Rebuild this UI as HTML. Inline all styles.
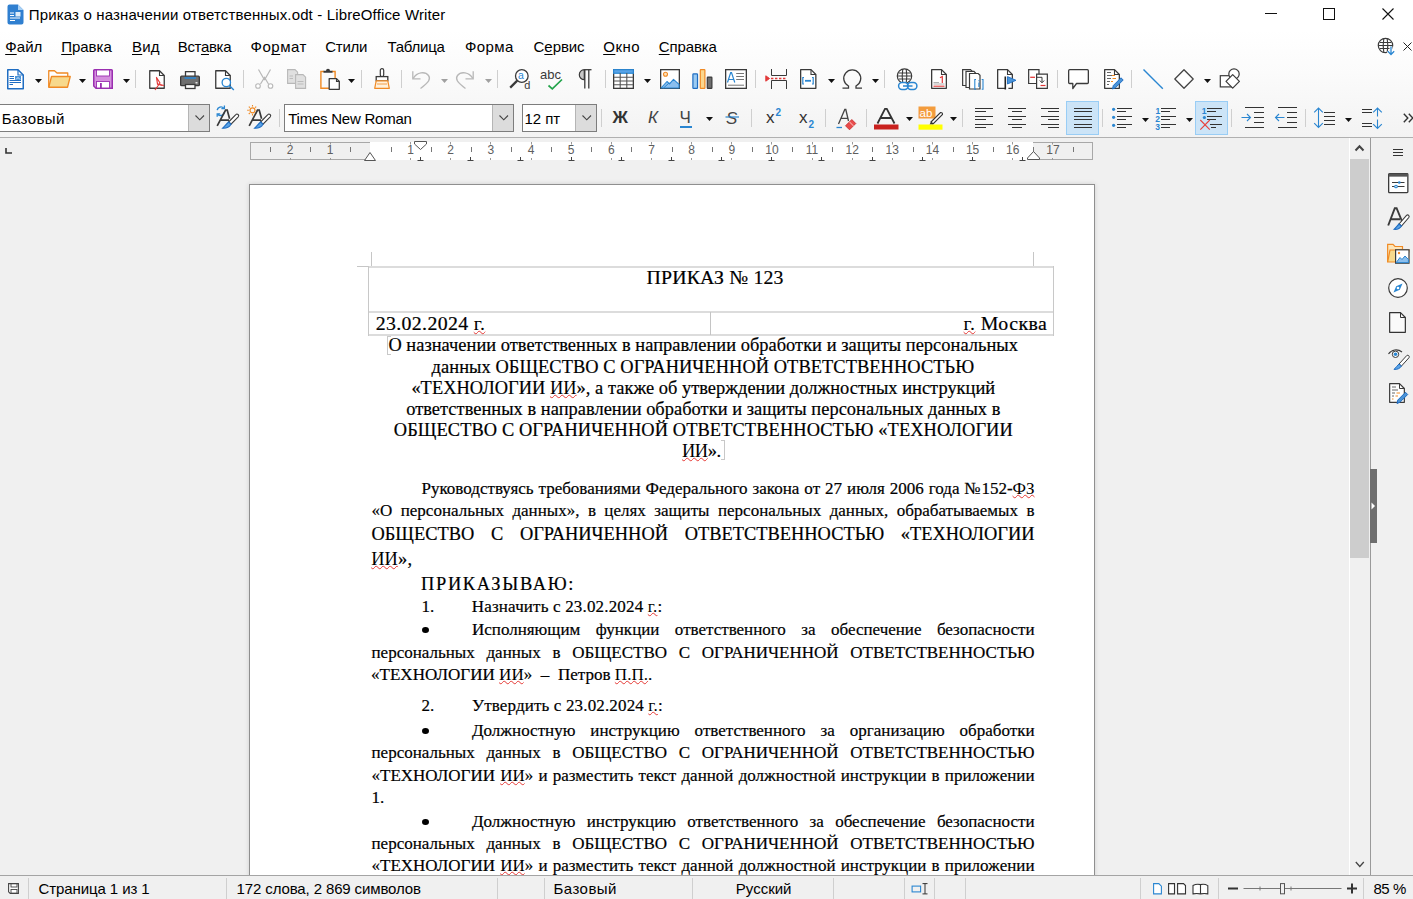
<!DOCTYPE html><html><head><meta charset="utf-8"><style>
html,body{margin:0;padding:0;}
body{width:1413px;height:899px;overflow:hidden;position:relative;background:#f0f0f0;font-family:"Liberation Sans",sans-serif;}
.t{position:absolute;}
.b{position:absolute;box-sizing:border-box;}
.i{position:absolute;overflow:visible;}
u{text-decoration:underline;text-decoration-thickness:1px;text-underline-offset:2px;text-decoration-skip-ink:none;}
.sq{text-decoration:underline wavy #e53935;text-decoration-thickness:1px;text-underline-offset:0px;-webkit-text-stroke:0;}
</style></head><body>
<div class="b" style="left:0px;top:0px;width:1413px;height:30px;background:#ffffff;"></div>
<div class="b" style="left:0px;top:30px;width:1413px;height:107px;background:linear-gradient(#ffffff 0%,#fbfbfb 40%,#f3f3f3 100%);"></div>
<div class="b" style="left:0px;top:137px;width:1413px;height:1px;background:#b0b0b0;"></div>
<div class="b" style="left:249px;top:184px;width:846px;height:720px;background:#fff;border:1px solid #8f8f8f;box-shadow:0 0 5px rgba(0,0,0,0.13);"></div>
<div class="b" style="left:357px;top:266px;width:15px;height:1px;background:#c6c6c6;"></div>
<div class="b" style="left:371px;top:252px;width:1px;height:15px;background:#c6c6c6;"></div>
<div class="b" style="left:1033px;top:252px;width:1px;height:15px;background:#c6c6c6;"></div>
<div class="b" style="left:1033px;top:266px;width:15px;height:1px;background:#c6c6c6;"></div>
<div class="b" style="left:368px;top:266px;width:686px;height:2px;background:#dcdcdc;"></div>
<div class="b" style="left:368px;top:311px;width:686px;height:2px;background:#dcdcdc;"></div>
<div class="b" style="left:368px;top:334px;width:686px;height:2px;background:#dcdcdc;"></div>
<div class="b" style="left:368px;top:266px;width:1px;height:70px;background:#c8c8c8;"></div>
<div class="b" style="left:1053px;top:266px;width:1px;height:70px;background:#c8c8c8;"></div>
<div class="b" style="left:710px;top:312px;width:1px;height:23px;background:#c4c4c4;"></div>
<div class="t" style="left:646.60px;top:264.11px;font-size:19.83px;line-height:26px;font-family:'Liberation Serif',serif;color:#000;letter-spacing:0.145px;-webkit-text-stroke:0.2px #000;text-align:left;white-space:pre;">ПРИКАЗ № 123</div>
<div class="t" style="left:375.80px;top:310.11px;font-size:19.83px;line-height:26px;font-family:'Liberation Serif',serif;color:#000;letter-spacing:0.342px;-webkit-text-stroke:0.2px #000;text-align:left;white-space:pre;">23.02.2024 <span class="sq">г.</span></div>
<div class="t" style="left:963.60px;top:310.11px;font-size:19.83px;line-height:26px;font-family:'Liberation Serif',serif;color:#000;letter-spacing:0.45px;-webkit-text-stroke:0.2px #000;text-align:left;white-space:pre;"><span class="sq">г.</span> Москва</div>
<div class="b" style="left:387px;top:336px;width:1px;height:19px;background:#c8c8c8;"></div>
<div class="b" style="left:387px;top:336px;width:4px;height:1px;background:#c8c8c8;"></div>
<div class="b" style="left:387px;top:354px;width:4px;height:1px;background:#c8c8c8;"></div>
<div class="t" style="left:388.40px;top:332.98px;font-size:18.42px;line-height:24px;font-family:'Liberation Serif',serif;color:#000;letter-spacing:0.027px;-webkit-text-stroke:0.2px #000;text-align:left;white-space:pre;">О назначении ответственных в направлении обработки и защиты персональных</div>
<div class="t" style="left:431.60px;top:354.68px;font-size:18.42px;line-height:24px;font-family:'Liberation Serif',serif;color:#000;letter-spacing:0.059px;-webkit-text-stroke:0.2px #000;text-align:left;white-space:pre;">данных ОБЩЕСТВО С ОГРАНИЧЕННОЙ ОТВЕТСТВЕННОСТЬЮ</div>
<div class="t" style="left:411.40px;top:375.58px;font-size:18.42px;line-height:24px;font-family:'Liberation Serif',serif;color:#000;letter-spacing:0.026px;-webkit-text-stroke:0.2px #000;text-align:left;white-space:pre;">«ТЕХНОЛОГИИ <span class="sq">ИИ</span>», а также об утверждении должностных инструкций</div>
<div class="t" style="left:406.20px;top:396.98px;font-size:18.42px;line-height:24px;font-family:'Liberation Serif',serif;color:#000;letter-spacing:0.03px;-webkit-text-stroke:0.2px #000;text-align:left;white-space:pre;">ответственных в направлении обработки и защиты персональных данных в</div>
<div class="t" style="left:393.80px;top:417.98px;font-size:18.42px;line-height:24px;font-family:'Liberation Serif',serif;color:#000;letter-spacing:0.086px;-webkit-text-stroke:0.2px #000;text-align:left;white-space:pre;">ОБЩЕСТВО С ОГРАНИЧЕННОЙ ОТВЕТСТВЕННОСТЬЮ «ТЕХНОЛОГИИ</div>
<div class="t" style="left:682.00px;top:438.98px;font-size:18.42px;line-height:24px;font-family:'Liberation Serif',serif;color:#000;letter-spacing:-0.433px;-webkit-text-stroke:0.2px #000;text-align:left;white-space:pre;"><span class="sq">ИИ</span>».</div>
<div class="b" style="left:724px;top:440px;width:1px;height:20px;background:#c8c8c8;"></div>
<div class="b" style="left:721px;top:440px;width:4px;height:1px;background:#c8c8c8;"></div>
<div class="b" style="left:721px;top:459px;width:4px;height:1px;background:#c8c8c8;"></div>
<div class="t" style="left:421.50px;top:478.06px;font-size:17.0px;line-height:22px;font-family:'Liberation Serif',serif;color:#000;-webkit-text-stroke:0.2px #000;width:613.00px;text-align:justify;text-align-last:justify;white-space:normal;">Руководствуясь требованиями Федерального закона от 27 июля 2006 года №152-<span class="sq">ФЗ</span></div>
<div class="t" style="left:371.50px;top:500.06px;font-size:17.0px;line-height:22px;font-family:'Liberation Serif',serif;color:#000;-webkit-text-stroke:0.2px #000;width:663.00px;text-align:justify;text-align-last:justify;white-space:normal;">«О персональных данных», в целях защиты персональных данных, обрабатываемых в</div>
<div class="t" style="left:371.50px;top:522.28px;font-size:18.42px;line-height:24px;font-family:'Liberation Serif',serif;color:#000;-webkit-text-stroke:0.2px #000;width:663.00px;text-align:justify;text-align-last:justify;white-space:normal;">ОБЩЕСТВО С ОГРАНИЧЕННОЙ ОТВЕТСТВЕННОСТЬЮ «ТЕХНОЛОГИИ</div>
<div class="t" style="left:371.20px;top:547.48px;font-size:18.42px;line-height:24px;font-family:'Liberation Serif',serif;color:#000;letter-spacing:0.133px;-webkit-text-stroke:0.2px #000;text-align:left;white-space:pre;"><span class="sq">ИИ</span>»,</div>
<div class="t" style="left:421.00px;top:571.78px;font-size:18.42px;line-height:24px;font-family:'Liberation Serif',serif;color:#000;letter-spacing:1.68px;-webkit-text-stroke:0.2px #000;text-align:left;white-space:pre;">ПРИКАЗЫВАЮ:</div>
<div class="t" style="left:421.50px;top:595.76px;font-size:17.0px;line-height:22px;font-family:'Liberation Serif',serif;color:#000;-webkit-text-stroke:0.2px #000;text-align:left;white-space:pre;">1.</div>
<div class="t" style="left:471.80px;top:595.76px;font-size:17.0px;line-height:22px;font-family:'Liberation Serif',serif;color:#000;letter-spacing:0.168px;-webkit-text-stroke:0.2px #000;text-align:left;white-space:pre;">Назначить с 23.02.2024 <span class="sq">г.</span>:</div>
<div class="b" style="left:422.3px;top:626.9px;width:7px;height:6.2px;background:#000;border-radius:50%;"></div>
<div class="t" style="left:472.00px;top:618.66px;font-size:17.0px;line-height:22px;font-family:'Liberation Serif',serif;color:#000;-webkit-text-stroke:0.2px #000;width:562.50px;text-align:justify;text-align-last:justify;white-space:normal;">Исполняющим функции ответственного за обеспечение безопасности</div>
<div class="t" style="left:371.50px;top:641.66px;font-size:17.0px;line-height:22px;font-family:'Liberation Serif',serif;color:#000;-webkit-text-stroke:0.2px #000;width:663.00px;text-align:justify;text-align-last:justify;white-space:normal;">персональных данных в ОБЩЕСТВО С ОГРАНИЧЕННОЙ ОТВЕТСТВЕННОСТЬЮ</div>
<div class="t" style="left:371.00px;top:664.26px;font-size:17.0px;line-height:22px;font-family:'Liberation Serif',serif;color:#000;letter-spacing:0.032px;-webkit-text-stroke:0.2px #000;text-align:left;white-space:pre;">«ТЕХНОЛОГИИ <span class="sq">ИИ</span>»  –  Петров <span class="sq">П.П.</span>.</div>
<div class="t" style="left:421.50px;top:695.26px;font-size:17.0px;line-height:22px;font-family:'Liberation Serif',serif;color:#000;-webkit-text-stroke:0.2px #000;text-align:left;white-space:pre;">2.</div>
<div class="t" style="left:472.00px;top:695.26px;font-size:17.0px;line-height:22px;font-family:'Liberation Serif',serif;color:#000;letter-spacing:0.148px;-webkit-text-stroke:0.2px #000;text-align:left;white-space:pre;">Утвердить с 23.02.2024 <span class="sq">г.</span>:</div>
<div class="b" style="left:422.3px;top:728.0px;width:7px;height:6.2px;background:#000;border-radius:50%;"></div>
<div class="t" style="left:472.00px;top:719.76px;font-size:17.0px;line-height:22px;font-family:'Liberation Serif',serif;color:#000;-webkit-text-stroke:0.2px #000;width:562.50px;text-align:justify;text-align-last:justify;white-space:normal;">Должностную инструкцию ответственного за организацию обработки</div>
<div class="t" style="left:371.50px;top:742.26px;font-size:17.0px;line-height:22px;font-family:'Liberation Serif',serif;color:#000;-webkit-text-stroke:0.2px #000;width:663.00px;text-align:justify;text-align-last:justify;white-space:normal;">персональных данных в ОБЩЕСТВО С ОГРАНИЧЕННОЙ ОТВЕТСТВЕННОСТЬЮ</div>
<div class="t" style="left:371.50px;top:764.76px;font-size:17.0px;line-height:22px;font-family:'Liberation Serif',serif;color:#000;-webkit-text-stroke:0.2px #000;width:663.00px;text-align:justify;text-align-last:justify;white-space:normal;">«ТЕХНОЛОГИИ <span class="sq">ИИ</span>» и разместить текст данной должностной инструкции в приложении</div>
<div class="t" style="left:371.50px;top:787.36px;font-size:17.0px;line-height:22px;font-family:'Liberation Serif',serif;color:#000;-webkit-text-stroke:0.2px #000;text-align:left;white-space:pre;">1.</div>
<div class="b" style="left:422.3px;top:818.9px;width:7px;height:6.2px;background:#000;border-radius:50%;"></div>
<div class="t" style="left:472.00px;top:810.66px;font-size:17.0px;line-height:22px;font-family:'Liberation Serif',serif;color:#000;-webkit-text-stroke:0.2px #000;width:562.50px;text-align:justify;text-align-last:justify;white-space:normal;">Должностную инструкцию ответственного за обеспечение безопасности</div>
<div class="t" style="left:371.50px;top:832.86px;font-size:17.0px;line-height:22px;font-family:'Liberation Serif',serif;color:#000;-webkit-text-stroke:0.2px #000;width:663.00px;text-align:justify;text-align-last:justify;white-space:normal;">персональных данных в ОБЩЕСТВО С ОГРАНИЧЕННОЙ ОТВЕТСТВЕННОСТЬЮ</div>
<div class="t" style="left:371.50px;top:855.06px;font-size:17.0px;line-height:22px;font-family:'Liberation Serif',serif;color:#000;-webkit-text-stroke:0.2px #000;width:663.00px;text-align:justify;text-align-last:justify;white-space:normal;">«ТЕХНОЛОГИИ <span class="sq">ИИ</span>» и разместить текст данной должностной инструкции в приложении</div>
<svg class="i" style="left:7px;top:4px;" width="17" height="21" viewBox="0 0 17 21"><path d="M1.5,0.5H11L16.5,6V18.5A2,2 0 0 1 14.5,20.5H2.5A2,2 0 0 1 0.5,18.5V2.5A2,2 0 0 1 2.5,0.5Z" fill="#2f7fd0"/><path d="M11,0.5V6H16.5Z" fill="#a9d1f5"/><path d="M3,9H7M3,11.5H7M3,14H13M3,16.5H8" stroke="#fff" stroke-width="1.2"/><rect x="8.5" y="8" width="5" height="4.5" fill="#fff" opacity="0.85"/></svg>
<div class="t" style="left:28.80px;top:5.10px;font-size:15px;line-height:20px;font-family:'Liberation Sans',sans-serif;color:#000;letter-spacing:0.146px;text-align:left;white-space:pre;">Приказ о назначении ответственных.odt - LibreOffice Writer</div>
<div class="b" style="left:1265px;top:13px;width:12px;height:1px;background:#111;"></div>
<div class="b" style="left:1323px;top:8px;width:12px;height:12px;border:1px solid #111;"></div>
<svg class="i" style="left:1382px;top:8px;" width="12" height="12" viewBox="0 0 12 12"><path d="M0.5,0.5L11.5,11.5M11.5,0.5L0.5,11.5" stroke="#111" stroke-width="1.1"/></svg>
<div class="t" style="left:5.20px;top:37.20px;font-size:15px;line-height:20px;font-family:'Liberation Sans',sans-serif;color:#000;letter-spacing:0.1px;text-align:left;white-space:pre;"><u>Ф</u>айл</div>
<div class="t" style="left:61.20px;top:37.20px;font-size:15px;line-height:20px;font-family:'Liberation Sans',sans-serif;color:#000;letter-spacing:-0.02px;text-align:left;white-space:pre;"><u>П</u>равка</div>
<div class="t" style="left:132.00px;top:37.20px;font-size:15px;line-height:20px;font-family:'Liberation Sans',sans-serif;color:#000;letter-spacing:0.2px;text-align:left;white-space:pre;"><u>В</u>ид</div>
<div class="t" style="left:177.80px;top:37.20px;font-size:15px;line-height:20px;font-family:'Liberation Sans',sans-serif;color:#000;letter-spacing:-0.35px;text-align:left;white-space:pre;">Вст<u>а</u>вка</div>
<div class="t" style="left:250.60px;top:37.20px;font-size:15px;line-height:20px;font-family:'Liberation Sans',sans-serif;color:#000;letter-spacing:0.5px;text-align:left;white-space:pre;">Фо<u>р</u>мат</div>
<div class="t" style="left:325.20px;top:37.20px;font-size:15px;line-height:20px;font-family:'Liberation Sans',sans-serif;color:#000;letter-spacing:-0.25px;text-align:left;white-space:pre;">Стили</div>
<div class="t" style="left:387.40px;top:37.20px;font-size:15px;line-height:20px;font-family:'Liberation Sans',sans-serif;color:#000;letter-spacing:-0.217px;text-align:left;white-space:pre;">Таблица</div>
<div class="t" style="left:465.00px;top:37.20px;font-size:15px;line-height:20px;font-family:'Liberation Sans',sans-serif;color:#000;letter-spacing:0.375px;text-align:left;white-space:pre;">Форма</div>
<div class="t" style="left:533.60px;top:37.20px;font-size:15px;line-height:20px;font-family:'Liberation Sans',sans-serif;color:#000;letter-spacing:-0.08px;text-align:left;white-space:pre;">С<u>е</u>рвис</div>
<div class="t" style="left:603.20px;top:37.20px;font-size:15px;line-height:20px;font-family:'Liberation Sans',sans-serif;color:#000;letter-spacing:0.533px;text-align:left;white-space:pre;"><u>О</u>кно</div>
<div class="t" style="left:658.80px;top:37.20px;font-size:15px;line-height:20px;font-family:'Liberation Sans',sans-serif;color:#000;letter-spacing:-0.117px;text-align:left;white-space:pre;"><u>С</u>правка</div>
<svg class="i" style="left:1377px;top:37px;" width="19" height="19" viewBox="0 0 19 19"><circle cx="8.5" cy="8.5" r="7.2" fill="none" stroke="#3a3a3a" stroke-width="1.2"/><path d="M6.8,1.5C6,6 6,11 6.8,15.5M10.2,1.5C11,6 11,11 10.2,15.5M2.8,5.5H14.2M1.3,8.5H15.7M2.8,11.5H14.2" fill="none" stroke="#3a3a3a" stroke-width="1.1"/><path d="M14,9.5V17.5M10.8,14.3L14,17.5L17.2,14.3" fill="none" stroke="#fff" stroke-width="3"/><path d="M14,9.5V17.5M10.8,14.3L14,17.5L17.2,14.3" fill="none" stroke="#2a86d1" stroke-width="1.3"/></svg>
<svg class="i" style="left:1403px;top:42px;" width="9" height="9" viewBox="0 0 9 9"><path d="M0.5,0.5L8.5,8.5M8.5,0.5L0.5,8.5" stroke="#222" stroke-width="1"/></svg>
<svg class="i" style="left:7px;top:69px;" width="17" height="21" viewBox="0 0 17 21"><path d="M0.75,0.75H11L16.25,6V19.75H0.75Z" fill="#fff" stroke="#1f6dc2" stroke-width="1.5" stroke-linejoin="round"/><path d="M11,0.75V6H16.25" fill="none" stroke="#1f6dc2" stroke-width="1.2"/><path d="M2.5,7.5H7M2.5,9.5H7M2.5,11.5H14M2.5,13.5H14M2.5,15.5H6" stroke="#1f6dc2" stroke-width="1"/><rect x="8" y="7" width="6" height="4" fill="#4b94d8"/><path d="M9,10.5L11,8.5L13,10.5" stroke="#fff" stroke-width="0.8" fill="none"/></svg>
<svg class="i" style="left:35px;top:79px;" width="7" height="4" viewBox="0 0 7 4"><path d="M0,0H7L3.5,4Z" fill="#111"/></svg>
<svg class="i" style="left:48px;top:70px;" width="23" height="18" viewBox="0 0 23 18"><path d="M0.75,17V0.75H6.5L9,3H19.75V6" fill="#fff" stroke="#f08a24" stroke-width="1.3" stroke-linejoin="round"/><path d="M0.75,17.25L3.5,6.5H22.25L19.5,17.25Z" fill="#f7d98c" stroke="#f08a24" stroke-width="1.3" stroke-linejoin="round"/></svg>
<svg class="i" style="left:79px;top:79px;" width="7" height="4" viewBox="0 0 7 4"><path d="M0,0H7L3.5,4Z" fill="#111"/></svg>
<svg class="i" style="left:93px;top:69px;" width="20" height="20" viewBox="0 0 20 20"><path d="M1.5,0.75H18.5A0.75,0.75 0 0 1 19.25,1.5V19.25H3L0.75,17V1.5A0.75,0.75 0 0 1 1.5,0.75Z" fill="#d590de" stroke="#9a2fb0" stroke-width="1.5"/><rect x="3.5" y="1" width="13" height="6" fill="#fff" stroke="#9a2fb0" stroke-width="0.9"/><rect x="3.5" y="12.5" width="13" height="6.5" fill="#fff" stroke="#9a2fb0" stroke-width="0.9"/><rect x="7" y="14" width="1.8" height="5" fill="#9a2fb0"/></svg>
<svg class="i" style="left:123px;top:79px;" width="7" height="4" viewBox="0 0 7 4"><path d="M0,0H7L3.5,4Z" fill="#111"/></svg>
<div class="b" style="left:135px;top:70px;width:1px;height:18px;background:#cfcfcf;"></div>
<svg class="i" style="left:149px;top:70px;" width="20" height="21" viewBox="0 0 20 21"><path d="M0.75,0.75H10.5L15.25,5.5V18.25H0.75Z" fill="#fff" stroke="#3a3a3a" stroke-width="1.3" stroke-linejoin="round"/><path d="M10.5,0.75V5.5H15.25" fill="none" stroke="#3a3a3a" stroke-width="1.1"/><path d="M6,20L11,13L7.5,7.5L8.5,14L13.5,15.5" fill="none" stroke="#e23a3a" stroke-width="1.2" stroke-linejoin="round"/><path d="M8,14L15,15.5" stroke="#e23a3a" stroke-width="1.2"/></svg>
<svg class="i" style="left:180px;top:71px;" width="20" height="18" viewBox="0 0 20 18"><rect x="5.5" y="0.65" width="9.5" height="6.5" fill="#fff" stroke="#3a3a3a" stroke-width="1.3"/><rect x="0.65" y="5.2" width="18.7" height="9.5" rx="1" fill="#6f6f6f" stroke="#3a3a3a" stroke-width="1.3"/><rect x="4.5" y="6.2" width="11.5" height="1.6" fill="#2a86d1"/><rect x="5.5" y="13.5" width="9.5" height="4" fill="#fff" stroke="#3a3a3a" stroke-width="1.3"/><rect x="15.5" y="11.2" width="2" height="1.2" fill="#fff"/></svg>
<svg class="i" style="left:215px;top:70px;" width="20" height="21" viewBox="0 0 20 21"><path d="M0.75,0.75H10.5L15.25,5.5V18.25H0.75Z" fill="#fff" stroke="#3a3a3a" stroke-width="1.3" stroke-linejoin="round"/><path d="M10.5,0.75V5.5H15.25" fill="none" stroke="#3a3a3a" stroke-width="1.1"/><circle cx="11.3" cy="12.5" r="4.2" fill="#fff" stroke="#2a86d1" stroke-width="1.3"/><path d="M14.3,15.5L18.8,20" stroke="#2a86d1" stroke-width="1.4"/></svg>
<div class="b" style="left:243px;top:70px;width:1px;height:18px;background:#cfcfcf;"></div>
<svg class="i" style="left:255px;top:69px;" width="19" height="20" viewBox="0 0 19 20"><path d="M3.5,0.5L9.5,11M15.5,0.5L9.5,11M5.5,15L9.5,8.5L13.5,15" fill="none" stroke="#b8b8b8" stroke-width="1.2"/><circle cx="3" cy="17" r="2.3" fill="#fff" stroke="#b8b8b8" stroke-width="1.1"/><circle cx="15.5" cy="17" r="2.3" fill="#fff" stroke="#b8b8b8" stroke-width="1.1"/></svg>
<svg class="i" style="left:287px;top:69px;" width="21" height="20" viewBox="0 0 21 20"><path d="M0.6,0.6H8L10.6,3.2V14.4H0.6Z" fill="#e0e0e0" stroke="#b8b8b8" stroke-width="1.1"/><path d="M8.6,5.6H16L18.6,8.2V19.4H8.6Z" fill="#e0e0e0" stroke="#b8b8b8" stroke-width="1.1"/><path d="M2.5,7H6M2.5,9.5H6M10.5,12.5H16.5M10.5,15H16.5" stroke="#b8b8b8" stroke-width="0.9"/></svg>
<svg class="i" style="left:320px;top:68px;" width="20" height="22" viewBox="0 0 20 22"><path d="M4,3.5H0.9V20.3H9M12,3.5H15.1V10" fill="none" stroke="#f08a24" stroke-width="1.4"/><path d="M3.5,4.8V2.8H6A2,2 0 0 1 10,2.8H12.5V4.8Z" fill="#3a3a3a"/><path d="M9.2,10.6H16.5L19.3,13.4V21.3H9.2Z" fill="#fff" stroke="#3a3a3a" stroke-width="1.3" stroke-linejoin="round"/><path d="M16.5,10.6V13.4H19.3" fill="none" stroke="#3a3a3a" stroke-width="1.1"/></svg>
<svg class="i" style="left:348px;top:79px;" width="7" height="4" viewBox="0 0 7 4"><path d="M0,0H7L3.5,4Z" fill="#111"/></svg>
<div class="b" style="left:361px;top:70px;width:1px;height:18px;background:#cfcfcf;"></div>
<svg class="i" style="left:374px;top:68px;" width="16" height="21" viewBox="0 0 16 21"><rect x="6.3" y="0.6" width="3.4" height="8" rx="1.7" fill="#fff" stroke="#3a3a3a" stroke-width="1.2"/><rect x="2.2" y="8.6" width="11.6" height="4.2" fill="#fff" stroke="#3a3a3a" stroke-width="1.3"/><path d="M2.2,12.8H13.8L15.3,20.3H0.7Z" fill="#fff1dc" stroke="#f08a24" stroke-width="1.2" stroke-linejoin="round"/><path d="M3,16H13" stroke="#f08a24" stroke-width="0.8"/></svg>
<div class="b" style="left:401px;top:70px;width:1px;height:18px;background:#cfcfcf;"></div>
<svg class="i" style="left:411px;top:70px;" width="20" height="19" viewBox="0 0 20 19"><path d="M1.8,1.2V8.8H9.5" fill="none" stroke="#b8b8b8" stroke-width="1.3"/><path d="M2.2,8.3C6,2.2 14,1 17.5,5.5C20,9 18,12 9.5,18.5" fill="none" stroke="#b8b8b8" stroke-width="1.3"/></svg>
<svg class="i" style="left:441px;top:79px;" width="7" height="4" viewBox="0 0 7 4"><path d="M0,0H7L3.5,4Z" fill="#a0a0a0"/></svg>
<svg class="i" style="left:455px;top:70px;" width="20" height="19" viewBox="0 0 20 19"><g transform="translate(20,0) scale(-1,1)"><path d="M1.8,1.2V8.8H9.5" fill="none" stroke="#b8b8b8" stroke-width="1.3"/><path d="M2.2,8.3C6,2.2 14,1 17.5,5.5C20,9 18,12 9.5,18.5" fill="none" stroke="#b8b8b8" stroke-width="1.3"/></g></svg>
<svg class="i" style="left:485px;top:79px;" width="7" height="4" viewBox="0 0 7 4"><path d="M0,0H7L3.5,4Z" fill="#a0a0a0"/></svg>
<div class="b" style="left:497px;top:70px;width:1px;height:18px;background:#cfcfcf;"></div>
<svg class="i" style="left:509px;top:68px;" width="23" height="22" viewBox="0 0 23 22"><circle cx="12.8" cy="8" r="6.3" fill="#fff" stroke="#3a3a3a" stroke-width="1.3"/><path d="M8.2,12.6L1.2,19.6" stroke="#3a3a3a" stroke-width="2.2"/><text x="9" y="11.2" font-family="Liberation Sans" font-size="10.5" fill="#2a86d1">a</text><text x="15.2" y="21" font-family="Liberation Sans" font-size="11" fill="#3a3a3a">d</text></svg>
<svg class="i" style="left:540px;top:68px;" width="25" height="22" viewBox="0 0 25 22"><text x="0" y="11" font-family="Liberation Sans" font-size="13" fill="#3a3a3a">abc</text><path d="M8.5,17.5L12.3,20.8L22,11.5" fill="none" stroke="#22a34a" stroke-width="1.7"/></svg>
<svg class="i" style="left:576px;top:69px;" width="16" height="20" viewBox="0 0 16 20"><path d="M8.5,0.7H15.5" stroke="#3a3a3a" stroke-width="1.3"/><path d="M8.3,0.7A5,5 0 0 0 8.3,10.7Z" fill="#c8c8c8" stroke="#3a3a3a" stroke-width="1.2"/><path d="M8.8,0.7V19.5M12.8,0.7V19.5" stroke="#3a3a3a" stroke-width="1.3"/></svg>
<div class="b" style="left:605px;top:70px;width:1px;height:18px;background:#cfcfcf;"></div>
<svg class="i" style="left:613px;top:69px;" width="21" height="20" viewBox="0 0 21 20"><rect x="0.65" y="0.65" width="19.7" height="18.7" fill="#fff" stroke="#3a3a3a" stroke-width="1.3"/><rect x="0.65" y="0.65" width="19.7" height="3.6" fill="#5aa3e6" stroke="#2a86d1" stroke-width="1.2"/><path d="M7.2,4V19M13.8,4V19M1,8.2H20M1,12H20M1,15.7H20" stroke="#555" stroke-width="1.1"/></svg>
<svg class="i" style="left:644px;top:79px;" width="7" height="4" viewBox="0 0 7 4"><path d="M0,0H7L3.5,4Z" fill="#111"/></svg>
<svg class="i" style="left:660px;top:69px;" width="20" height="20" viewBox="0 0 20 20"><rect x="0.65" y="0.65" width="18.7" height="18.7" fill="#fff" stroke="#3a3a3a" stroke-width="1.3"/><circle cx="5.5" cy="5.3" r="2" fill="#fde0b8" stroke="#f08a24" stroke-width="1.1"/><path d="M1,19L7,12.5L9.5,14.8L13.5,10.3L19,15.3V19Z" fill="#8bbfee" stroke="#2a86d1" stroke-width="1.1" stroke-linejoin="round"/><path d="M3.5,19L9.3,13.8" stroke="#2a86d1" stroke-width="1"/></svg>
<svg class="i" style="left:692px;top:69px;" width="21" height="20" viewBox="0 0 21 20"><rect x="0.9" y="4.9" width="4.6" height="14.4" rx="0.6" fill="#9ccbf2" stroke="#1f6dc2" stroke-width="1.2"/><rect x="8.3" y="0.6" width="4.6" height="18.7" rx="0.6" fill="#fbd78e" stroke="#f08a24" stroke-width="1.2"/><rect x="15.3" y="8.1" width="4.6" height="11.2" rx="0.6" fill="#6e6e6e" stroke="#3a3a3a" stroke-width="1.2"/></svg>
<svg class="i" style="left:725px;top:69px;" width="22" height="20" viewBox="0 0 22 20"><rect x="0.65" y="0.65" width="20.7" height="18.7" fill="#fff" stroke="#3a3a3a" stroke-width="1.3"/><path d="M2.5,13.5L5.7,3.5H6.5L9.8,13.5M3.6,10.5H8.7" fill="none" stroke="#2a86d1" stroke-width="1.2"/><path d="M11.2,4.5H19M11.2,7.5H19M11.2,10.5H19M3,16.2H19" stroke="#666" stroke-width="0.9"/></svg>
<div class="b" style="left:755px;top:70px;width:1px;height:18px;background:#cfcfcf;"></div>
<svg class="i" style="left:765px;top:69px;" width="23" height="21" viewBox="0 0 23 21"><path d="M6.5,0V6.5H21.5V0M6.5,20V11.5H21.5V20" fill="none" stroke="#3a3a3a" stroke-width="1"/><path d="M6,9.5H22" stroke="#e23a3a" stroke-width="1.3" stroke-dasharray="2.4,1.6"/><path d="M0.8,6.8L4.5,9.5L0.8,12.2Z" fill="#e23a3a" stroke="#e23a3a" stroke-width="1"/></svg>
<svg class="i" style="left:800px;top:69px;" width="17" height="20" viewBox="0 0 17 20"><path d="M0.65,0.65H11L15.85,5.5V19.35H0.65Z" fill="#fff" stroke="#3a3a3a" stroke-width="1.3" stroke-linejoin="round"/><path d="M11,0.65V5.5H15.85" fill="none" stroke="#3a3a3a" stroke-width="1.1"/><path d="M4,8.5H2.8V15H4M12,8.5H13.2V15H12" fill="none" stroke="#2a86d1" stroke-width="1.2"/><path d="M5,11.8H11" stroke="#2a86d1" stroke-width="1.8"/></svg>
<svg class="i" style="left:828px;top:79px;" width="7" height="4" viewBox="0 0 7 4"><path d="M0,0H7L3.5,4Z" fill="#111"/></svg>
<svg class="i" style="left:842px;top:69px;" width="21" height="20" viewBox="0 0 21 20"><path d="M0.5,19.2H6.5V17A8.5,8.5 0 1 1 14,17V19.2H20" fill="none" stroke="#3a3a3a" stroke-width="1.3"/></svg>
<svg class="i" style="left:872px;top:79px;" width="7" height="4" viewBox="0 0 7 4"><path d="M0,0H7L3.5,4Z" fill="#111"/></svg>
<div class="b" style="left:884px;top:70px;width:1px;height:18px;background:#cfcfcf;"></div>
<svg class="i" style="left:896px;top:68px;" width="22" height="23" viewBox="0 0 22 23"><circle cx="8.5" cy="8" r="7.2" fill="#fff" stroke="#3a3a3a" stroke-width="1.2"/><path d="M6.8,1C6,5.5 6,10.5 6.8,15M10.2,1C11,5.5 11,10.5 10.2,15M2.8,5H14.2M1.3,8H15.7M2.8,11H14.2" fill="none" stroke="#3a3a3a" stroke-width="1.1"/><rect x="2.6" y="14.6" width="9.5" height="6.8" rx="3.4" fill="#fff" stroke="#2a86d1" stroke-width="1.5"/><rect x="11.4" y="14.6" width="9.5" height="6.8" rx="3.4" fill="none" stroke="#2a86d1" stroke-width="1.5"/><path d="M7,18H16.5" stroke="#2a86d1" stroke-width="1.5"/></svg>
<svg class="i" style="left:931px;top:69px;" width="17" height="21" viewBox="0 0 17 21"><path d="M0.65,0.65H10.5L15.35,5.5V19.35H0.65Z" fill="#fff" stroke="#3a3a3a" stroke-width="1.3" stroke-linejoin="round"/><path d="M10.5,0.65V5.5H15.35" fill="none" stroke="#3a3a3a" stroke-width="1.1"/><path d="M9,8.8L11.3,7.5V14" fill="none" stroke="#e23a3a" stroke-width="1.2"/><path d="M2.5,13.5H8M2.5,15H13.5" stroke="#b0b0b0" stroke-width="1"/><path d="M2.5,17.2H13.5" stroke="#e23a3a" stroke-width="1.1"/></svg>
<svg class="i" style="left:962px;top:69px;" width="23" height="22" viewBox="0 0 23 22"><path d="M0.65,0.65H8.5L10,2.2V16.5H0.65Z" fill="#fff" stroke="#3a3a3a" stroke-width="1.2"/><path d="M4,2.4H12L13.5,4V18.5H4Z" fill="#fff" stroke="#3a3a3a" stroke-width="1.2"/><path d="M7.5,4.5H16.2L18,6.2V20H7.5Z" fill="#fff" stroke="#3a3a3a" stroke-width="1.2"/><path d="M14,10.5H12.8V20.3H14M19.7,10.5H21V20.3H19.7" fill="none" stroke="#2a86d1" stroke-width="1.1"/><path d="M16.9,13.5V18M16.9,11.2V12.3" stroke="#2a86d1" stroke-width="1.1"/></svg>
<svg class="i" style="left:997px;top:69px;" width="20" height="21" viewBox="0 0 20 21"><path d="M0.65,0.65H10.5L15.35,5.5V19.35H0.65Z" fill="#fff" stroke="#3a3a3a" stroke-width="1.3" stroke-linejoin="round"/><path d="M10.5,0.65V5.5H15.35" fill="none" stroke="#3a3a3a" stroke-width="1.1"/><rect x="9" y="7.5" width="2.4" height="13" fill="#fff"/><rect x="7.5" y="7.5" width="1.6" height="13" fill="#222"/><path d="M10.5,7.6L19,11.3L10.5,15Z" fill="#4b94d8" stroke="#1f6dc2" stroke-width="0.9"/></svg>
<svg class="i" style="left:1028px;top:69px;" width="21" height="21" viewBox="0 0 21 21"><path d="M0.65,0.65H11V14.5H0.65Z" fill="#fff" stroke="#3a3a3a" stroke-width="1.2"/><path d="M8.6,5.2H19.35V19.35H8.6Z" fill="#fff" stroke="#3a3a3a" stroke-width="1.2"/><path d="M2.2,8.3H7" stroke="#e23a3a" stroke-width="1.3"/><path d="M8,8.3H14V13.5M11.8,11.5L14,13.8L16.2,11.5" fill="none" stroke="#3a3a3a" stroke-width="1"/><path d="M12.5,16.5H17.5" stroke="#e23a3a" stroke-width="1.2"/></svg>
<div class="b" style="left:1057px;top:70px;width:1px;height:18px;background:#cfcfcf;"></div>
<svg class="i" style="left:1068px;top:69px;" width="22" height="21" viewBox="0 0 22 21"><path d="M1.65,0.65H19.35A1,1 0 0 1 20.35,1.65V13.5A1,1 0 0 1 19.35,14.5H8.5L4.8,19.6V14.5H1.65A1,1 0 0 1 0.65,13.5V1.65A1,1 0 0 1 1.65,0.65Z" fill="#fff" stroke="#3a3a3a" stroke-width="1.3" stroke-linejoin="round"/></svg>
<svg class="i" style="left:1104px;top:69px;" width="20" height="21" viewBox="0 0 20 21"><path d="M0.65,0.65H10.5L15.35,5.5V19.35H0.65Z" fill="#fff" stroke="#3a3a3a" stroke-width="1.3" stroke-linejoin="round"/><path d="M10.5,0.65V5.5H15.35" fill="none" stroke="#3a3a3a" stroke-width="1.1"/><path d="M3,3.5H7M3,6.5H9M3,9.5H7M3,12.5H6M3,15.5H5" stroke="#555" stroke-width="0.9"/><path d="M8,6.5H11M8.5,9.5H12M7,12.5H9" stroke="#f08a24" stroke-width="1"/><path d="M8.5,20L9.3,16.5L17,8.8L19.2,11L11.5,18.7Z" fill="#4b94d8" stroke="#1f6dc2" stroke-width="1"/></svg>
<div class="b" style="left:1131px;top:70px;width:1px;height:18px;background:#cfcfcf;"></div>
<svg class="i" style="left:1143px;top:69px;" width="21" height="21" viewBox="0 0 21 21"><path d="M0.5,0.5L19.8,19.8" stroke="#2a86d1" stroke-width="1.4"/></svg>
<svg class="i" style="left:1174px;top:69px;" width="21" height="21" viewBox="0 0 21 21"><path d="M10,0.8L19.2,10L10,19.2L0.8,10Z" fill="#fff" stroke="#444" stroke-width="1.3" stroke-linejoin="round"/></svg>
<svg class="i" style="left:1204px;top:79px;" width="7" height="4" viewBox="0 0 7 4"><path d="M0,0H7L3.5,4Z" fill="#111"/></svg>
<svg class="i" style="left:1219px;top:68px;" width="23" height="23" viewBox="0 0 23 23"><rect x="1.3" y="7.7" width="11.5" height="11.2" fill="#fff" stroke="#3a3a3a" stroke-width="1.2"/><circle cx="15" cy="6" r="5.2" fill="#fff" stroke="#3a3a3a" stroke-width="1.2"/><path d="M13.7,6.7L20.4,13.4L13.7,20.1L7,13.4Z" fill="#fff" stroke="#3a3a3a" stroke-width="1.2" stroke-linejoin="round"/></svg>
<div class="b" style="left:-1px;top:104px;width:211px;height:28px;background:#fff;border:1px solid #7d7d7d;"></div>
<div class="b" style="left:188px;top:105px;width:21px;height:26px;background:#dcdcdc;border-left:1px solid #b5b5b5;"></div>
<svg class="i" style="left:194.5px;top:115px;" width="10" height="6" viewBox="0 0 10 6"><path d="M0.5,0.5L4.75,4.8L9,0.5" fill="none" stroke="#444" stroke-width="1.1"/></svg>
<div class="t" style="left:1.80px;top:108.60px;font-size:15px;line-height:20px;font-family:'Liberation Sans',sans-serif;color:#000;letter-spacing:0.383px;text-align:left;white-space:pre;">Базовый</div>
<div class="b" style="left:284px;top:104px;width:230px;height:28px;background:#fff;border:1px solid #7d7d7d;"></div>
<div class="b" style="left:492px;top:105px;width:21px;height:26px;background:#dcdcdc;border-left:1px solid #b5b5b5;"></div>
<svg class="i" style="left:498.5px;top:115px;" width="10" height="6" viewBox="0 0 10 6"><path d="M0.5,0.5L4.75,4.8L9,0.5" fill="none" stroke="#444" stroke-width="1.1"/></svg>
<div class="t" style="left:288.20px;top:108.60px;font-size:15px;line-height:20px;font-family:'Liberation Sans',sans-serif;color:#000;letter-spacing:-0.236px;text-align:left;white-space:pre;">Times New Roman</div>
<div class="b" style="left:522px;top:104px;width:75px;height:28px;background:#fff;border:1px solid #7d7d7d;"></div>
<div class="b" style="left:575px;top:105px;width:21px;height:26px;background:#dcdcdc;border-left:1px solid #b5b5b5;"></div>
<svg class="i" style="left:581.5px;top:115px;" width="10" height="6" viewBox="0 0 10 6"><path d="M0.5,0.5L4.75,4.8L9,0.5" fill="none" stroke="#444" stroke-width="1.1"/></svg>
<div class="t" style="left:524.60px;top:108.60px;font-size:15px;line-height:20px;font-family:'Liberation Sans',sans-serif;color:#000;letter-spacing:-0.075px;text-align:left;white-space:pre;">12 пт</div>
<svg class="i" style="left:215px;top:105px;" width="24" height="25" viewBox="0 0 24 25"><path d="M2.2,5.2A3.8,3.8 0 0 1 8.8,3.2M9.4,7.2A3.8,3.8 0 0 1 2.8,9.2" fill="none" stroke="#2a86d1" stroke-width="1.4"/><path d="M9.4,0.6V3.6H6.4M2.2,11.8V8.8H5.2" fill="none" stroke="#2a86d1" stroke-width="1.3"/><path d="M2.2,20.8L10.6,5H12.2L14.6,13.8M5.8,15.2H14" fill="none" stroke="#3a3a3a" stroke-width="1.7"/><path d="M13.6,17L20.8,9.6A1.6,1.6 0 0 1 23.2,11.8L16,19.2Z" fill="#fff" stroke="#3a3a3a" stroke-width="1.1"/><path d="M16,19.2C14.6,21.6 11.6,23.4 7.6,23.2C9.8,21 11.4,19 13.6,17Z" fill="#5aa3e6" stroke="#1f6dc2" stroke-width="1.1"/></svg>
<svg class="i" style="left:247px;top:105px;" width="24" height="25" viewBox="0 0 24 25"><circle cx="5.5" cy="5.3" r="2.5" fill="none" stroke="#f08a24" stroke-width="1.2"/><path d="M5.5,0V1.6M5.5,9V10.6M0.2,5.3H1.8M9.2,5.3H10.8M1.8,1.6L2.9,2.7M8.1,7.9L9.2,9M9.2,1.6L8.1,2.7M2.9,7.9L1.8,9" stroke="#f08a24" stroke-width="1.1"/><path d="M2.2,20.8L10.6,5H12.2L14.6,13.8M5.8,15.2H14" fill="none" stroke="#3a3a3a" stroke-width="1.7"/><path d="M13.6,17L20.8,9.6A1.6,1.6 0 0 1 23.2,11.8L16,19.2Z" fill="#fff" stroke="#3a3a3a" stroke-width="1.1"/><path d="M16,19.2C14.6,21.6 11.6,23.4 7.6,23.2C9.8,21 11.4,19 13.6,17Z" fill="#5aa3e6" stroke="#1f6dc2" stroke-width="1.1"/></svg>
<div class="b" style="left:279px;top:109px;width:1px;height:18px;background:#cfcfcf;"></div>
<div class="b" style="left:601px;top:109px;width:1px;height:18px;background:#cfcfcf;"></div>
<div class="t" style="left:612.50px;top:106.91px;font-size:17px;line-height:22px;font-family:'Liberation Sans',sans-serif;color:#333;text-align:left;white-space:pre;font-weight:bold;">Ж</div>
<div class="t" style="left:648.00px;top:106.91px;font-size:17px;line-height:22px;font-family:'Liberation Sans',sans-serif;color:#444;text-align:left;white-space:pre;font-style:italic;">К</div>
<div class="t" style="left:679.50px;top:106.91px;font-size:17px;line-height:22px;font-family:'Liberation Sans',sans-serif;color:#444;text-align:left;white-space:pre;">Ч</div>
<div class="b" style="left:680px;top:126px;width:12px;height:1.5px;background:#2a86d1;"></div>
<svg class="i" style="left:706px;top:117px;" width="7" height="4" viewBox="0 0 7 4"><path d="M0,0H7L3.5,4Z" fill="#111"/></svg>
<svg class="i" style="left:725px;top:108px;" width="15" height="17" viewBox="0 0 15 17"><text x="1" y="15.5" font-family="Liberation Sans" font-style="italic" font-size="17" fill="#444">S</text><path d="M0.5,9H14" stroke="#2a86d1" stroke-width="1.2"/></svg>
<div class="b" style="left:751px;top:109px;width:1px;height:18px;background:#cfcfcf;"></div>
<div class="t" style="left:766.00px;top:106.91px;font-size:17px;line-height:22px;font-family:'Liberation Sans',sans-serif;color:#333;text-align:left;white-space:pre;">x</div>
<div class="t" style="left:775.50px;top:106.03px;font-size:10px;line-height:13px;font-family:'Liberation Sans',sans-serif;color:#2a86d1;text-align:left;white-space:pre;font-weight:bold;">2</div>
<div class="t" style="left:799.00px;top:106.91px;font-size:17px;line-height:22px;font-family:'Liberation Sans',sans-serif;color:#333;text-align:left;white-space:pre;">x</div>
<div class="t" style="left:808.50px;top:117.53px;font-size:10px;line-height:13px;font-family:'Liberation Sans',sans-serif;color:#2a86d1;text-align:left;white-space:pre;font-weight:bold;">2</div>
<div class="b" style="left:825px;top:109px;width:1px;height:18px;background:#cfcfcf;"></div>
<svg class="i" style="left:836px;top:108px;" width="22" height="22" viewBox="0 0 22 22"><path d="M2.5,16L8.8,1.5H9.8L12.5,13M5,10.3H11.5" fill="none" stroke="#444" stroke-width="1.3"/><path d="M0.5,19.5H6" stroke="#2a86d1" stroke-width="1.3"/><path d="M9.5,17.8L15.8,11.5L19.8,15.5L13.5,21.8Z" fill="#e94b4b" stroke="#c42a2a" stroke-width="0.8"/><path d="M13.5,13.8L17.5,17.8" stroke="#f7a0a0" stroke-width="1.2"/></svg>
<div class="b" style="left:866px;top:109px;width:1px;height:18px;background:#cfcfcf;"></div>
<svg class="i" style="left:874px;top:108px;" width="25" height="22" viewBox="0 0 25 22"><path d="M3.5,15.5L11,0.8H12.8L20.5,15.5M6.5,10H17.5" fill="none" stroke="#333" stroke-width="1.8"/><rect x="0" y="16.5" width="24.5" height="5" fill="#c9211e"/></svg>
<svg class="i" style="left:906px;top:117px;" width="7" height="4" viewBox="0 0 7 4"><path d="M0,0H7L3.5,4Z" fill="#111"/></svg>
<svg class="i" style="left:918px;top:106px;" width="25" height="24" viewBox="0 0 25 24"><rect x="0.5" y="0.5" width="17" height="12" fill="#f39c3d"/><text x="1.5" y="11" font-family="Liberation Sans" font-size="11.5" fill="#fff">ab</text><path d="M13,16L22.5,6.5A1.7,1.7 0 0 1 24.5,8.5L15,18Z" fill="#fff" stroke="#333" stroke-width="1.1"/><path d="M13,16L11.5,18.5H15Z" fill="#333"/><rect x="0.5" y="18.5" width="24" height="5.2" fill="#ffff00"/></svg>
<svg class="i" style="left:950px;top:117px;" width="7" height="4" viewBox="0 0 7 4"><path d="M0,0H7L3.5,4Z" fill="#111"/></svg>
<div class="b" style="left:962px;top:109px;width:1px;height:18px;background:#cfcfcf;"></div>
<svg class="i" style="left:0px;top:0px;" width="1413" height="140" viewBox="0 0 1413 140"><path d="M975,108.5H993M975,111.5H986M975,116.5H993M975,119.5H986M975,124.5H993M975,127.5H986" stroke="#333" stroke-width="1"/></svg>
<svg class="i" style="left:0px;top:0px;" width="1413" height="140" viewBox="0 0 1413 140"><path d="M1008,108.5H1026M1012,111.5H1022M1008,116.5H1026M1012,119.5H1022M1008,124.5H1026M1012,127.5H1022" stroke="#333" stroke-width="1"/></svg>
<svg class="i" style="left:0px;top:0px;" width="1413" height="140" viewBox="0 0 1413 140"><path d="M1041,108.5H1059M1048,111.5H1059M1041,116.5H1059M1048,119.5H1059M1041,124.5H1059M1048,127.5H1059" stroke="#333" stroke-width="1"/></svg>
<div class="b" style="left:1066px;top:101px;width:33px;height:34px;background:#cce4f7;border:1px solid #99cdf5;"></div>
<svg class="i" style="left:0px;top:0px;" width="1413" height="140" viewBox="0 0 1413 140"><path d="M1074,108.5H1092M1074,111.5H1092M1074,116.5H1092M1074,119.5H1092M1074,124.5H1092M1074,127.5H1092" stroke="#333" stroke-width="1"/></svg>
<div class="b" style="left:1102px;top:109px;width:1px;height:18px;background:#cfcfcf;"></div>
<svg class="i" style="left:0px;top:0px;" width="1413" height="140" viewBox="0 0 1413 140"><path d="M1117,108.5H1132M1117,111.5H1126M1117,116.5H1132M1117,119.5H1126M1117,124.5H1132M1117,127.5H1126" stroke="#333" stroke-width="1"/></svg>
<svg class="i" style="left:1111px;top:106px;" width="6" height="22" viewBox="0 0 6 22"><circle cx="2.6" cy="3.3" r="1.6" fill="#2a86d1"/><circle cx="2.6" cy="11.3" r="1.6" fill="#2a86d1"/><circle cx="2.6" cy="19.3" r="1.6" fill="#2a86d1"/></svg>
<svg class="i" style="left:1142px;top:118px;" width="7" height="4" viewBox="0 0 7 4"><path d="M0,0H7L3.5,4Z" fill="#111"/></svg>
<svg class="i" style="left:0px;top:0px;" width="1413" height="140" viewBox="0 0 1413 140"><path d="M1161,108.5H1176M1161,111.5H1170M1161,116.5H1176M1161,119.5H1170M1161,124.5H1176M1161,127.5H1170" stroke="#333" stroke-width="1"/></svg>
<svg class="i" style="left:1155px;top:106px;" width="7" height="25" viewBox="0 0 7 25"><text x="0.6" y="8" font-family="Liberation Sans" font-size="8.5" font-weight="bold" fill="#2a86d1">1</text><text x="0.3" y="15.6" font-family="Liberation Sans" font-size="8.5" font-weight="bold" fill="#2a86d1">2</text><text x="0.3" y="23.6" font-family="Liberation Sans" font-size="8.5" font-weight="bold" fill="#2a86d1">3</text></svg>
<svg class="i" style="left:1186px;top:118px;" width="7" height="4" viewBox="0 0 7 4"><path d="M0,0H7L3.5,4Z" fill="#111"/></svg>
<div class="b" style="left:1195px;top:101px;width:33px;height:34px;background:#cce4f7;border:1px solid #99cdf5;"></div>
<svg class="i" style="left:0px;top:0px;" width="1413" height="140" viewBox="0 0 1413 140"><path d="M1207,108.5H1222M1207,111.5H1216M1207,116.5H1222M1207,119.5H1216M1210,124.5H1222M1211,127.5H1216" stroke="#333" stroke-width="1"/></svg>
<svg class="i" style="left:1200px;top:106px;" width="12" height="25" viewBox="0 0 12 25"><text x="1.8" y="8" font-family="Liberation Sans" font-size="8.5" font-weight="bold" fill="#2a86d1">1</text><circle cx="4.4" cy="11.5" r="1.6" fill="#2a86d1"/><path d="M0.3,14L9.8,23.6M9.8,14L0.3,23.6" stroke="#e8413c" stroke-width="1.1"/></svg>
<div class="b" style="left:1231px;top:109px;width:1px;height:18px;background:#cfcfcf;"></div>
<svg class="i" style="left:0px;top:0px;" width="1413" height="140" viewBox="0 0 1413 140"><path d="M1245,107.5H1264M1254,112.5H1264M1254,117.5H1264M1254,122.5H1264M1245,127.5H1264" stroke="#333" stroke-width="1"/></svg>
<svg class="i" style="left:1241px;top:112px;" width="11" height="11" viewBox="0 0 11 11"><path d="M0.5,5.5H9.5M6,2L9.5,5.5L6,9" fill="none" stroke="#2a86d1" stroke-width="1.1"/></svg>
<svg class="i" style="left:0px;top:0px;" width="1413" height="140" viewBox="0 0 1413 140"><path d="M1278,107.5H1297M1287,112.5H1297M1287,117.5H1297M1287,122.5H1297M1278,127.5H1297" stroke="#333" stroke-width="1"/></svg>
<svg class="i" style="left:1274px;top:112px;" width="11" height="11" viewBox="0 0 11 11"><path d="M10.5,5.5H1.5M5,2L1.5,5.5L5,9" fill="none" stroke="#2a86d1" stroke-width="1.1"/></svg>
<div class="b" style="left:1305px;top:109px;width:1px;height:18px;background:#cfcfcf;"></div>
<svg class="i" style="left:0px;top:0px;" width="1413" height="140" viewBox="0 0 1413 140"><path d="M1324,112.5H1335M1324,116.5H1335M1324,120.5H1335M1324,124.5H1335" stroke="#333" stroke-width="1"/></svg>
<svg class="i" style="left:1313px;top:107px;" width="11" height="22" viewBox="0 0 11 22"><path d="M5.5,1V20.5M1.2,5.3L5.5,1L9.8,5.3M1.2,16.2L5.5,20.5L9.8,16.2" fill="none" stroke="#2a86d1" stroke-width="1.1"/></svg>
<svg class="i" style="left:1345px;top:118px;" width="7" height="4" viewBox="0 0 7 4"><path d="M0,0H7L3.5,4Z" fill="#111"/></svg>
<svg class="i" style="left:0px;top:0px;" width="1413" height="140" viewBox="0 0 1413 140"><path d="M1362,109.5H1372M1362,112.5H1372M1362,123.5H1372M1362,126.5H1372" stroke="#333" stroke-width="1"/></svg>
<svg class="i" style="left:1372px;top:107px;" width="11" height="23" viewBox="0 0 11 23"><path d="M5.5,1V9.5M1.2,5.3L5.5,1L9.8,5.3M5.5,12.5V21.5M1.2,17.2L5.5,21.5L9.8,17.2" fill="none" stroke="#2a86d1" stroke-width="1.1"/></svg>
<svg class="i" style="left:1403px;top:113px;" width="11" height="10" viewBox="0 0 11 10"><path d="M0.8,0.8L4.8,5L0.8,9.2M5.8,0.8L9.8,5L5.8,9.2" fill="none" stroke="#333" stroke-width="1.4"/></svg>
<div class="b" style="left:0px;top:138px;width:1349px;height:1px;background:#f0f0f0;"></div>
<svg class="i" style="left:5px;top:147px;" width="8" height="7" viewBox="0 0 8 7"><path d="M1,1V6H7" fill="none" stroke="#333" stroke-width="1.6"/></svg>
<div class="b" style="left:250px;top:142px;width:121px;height:18px;background:#f0f0f0;border:1px solid #a8a8a8;border-right:none;"></div>
<div class="b" style="left:370px;top:142px;width:664px;height:18px;background:#fff;"></div>
<div class="b" style="left:1033px;top:142px;width:60px;height:18px;background:#f0f0f0;border:1px solid #a8a8a8;border-left:none;"></div>
<svg class="i" style="left:250px;top:142px;" width="850" height="20" viewBox="0 0 850 20"><path d="M20.5,5V10" stroke="#777" stroke-width="1"/><text x="40.1" y="11.6" text-anchor="middle" font-family="Liberation Sans" font-size="12" fill="#5e5e5e">2</text><path d="M40.5,16V18M40.5,0V2.5" stroke="#999" stroke-width="1"/><path d="M60.5,5V10" stroke="#777" stroke-width="1"/><text x="80.2" y="11.6" text-anchor="middle" font-family="Liberation Sans" font-size="12" fill="#5e5e5e">1</text><path d="M80.5,16V18M80.5,0V2.5" stroke="#999" stroke-width="1"/><path d="M100.5,5V10" stroke="#777" stroke-width="1"/><path d="M141.5,5V10" stroke="#777" stroke-width="1"/><text x="160.5" y="11.6" text-anchor="middle" font-family="Liberation Sans" font-size="12" fill="#5e5e5e">1</text><path d="M160.5,16V18M160.5,0V2.5" stroke="#999" stroke-width="1"/><path d="M181.5,5V10" stroke="#777" stroke-width="1"/><text x="200.7" y="11.6" text-anchor="middle" font-family="Liberation Sans" font-size="12" fill="#5e5e5e">2</text><path d="M200.5,16V18M200.5,0V2.5" stroke="#999" stroke-width="1"/><path d="M221.5,5V10" stroke="#777" stroke-width="1"/><text x="240.8" y="11.6" text-anchor="middle" font-family="Liberation Sans" font-size="12" fill="#5e5e5e">3</text><path d="M240.5,16V18M240.5,0V2.5" stroke="#999" stroke-width="1"/><path d="M261.5,5V10" stroke="#777" stroke-width="1"/><text x="281.0" y="11.6" text-anchor="middle" font-family="Liberation Sans" font-size="12" fill="#5e5e5e">4</text><path d="M281.5,16V18M281.5,0V2.5" stroke="#999" stroke-width="1"/><path d="M301.5,5V10" stroke="#777" stroke-width="1"/><text x="321.1" y="11.6" text-anchor="middle" font-family="Liberation Sans" font-size="12" fill="#5e5e5e">5</text><path d="M321.5,16V18M321.5,0V2.5" stroke="#999" stroke-width="1"/><path d="M341.5,5V10" stroke="#777" stroke-width="1"/><text x="361.3" y="11.6" text-anchor="middle" font-family="Liberation Sans" font-size="12" fill="#5e5e5e">6</text><path d="M361.5,16V18M361.5,0V2.5" stroke="#999" stroke-width="1"/><path d="M381.5,5V10" stroke="#777" stroke-width="1"/><text x="401.5" y="11.6" text-anchor="middle" font-family="Liberation Sans" font-size="12" fill="#5e5e5e">7</text><path d="M401.5,16V18M401.5,0V2.5" stroke="#999" stroke-width="1"/><path d="M422.5,5V10" stroke="#777" stroke-width="1"/><text x="441.6" y="11.6" text-anchor="middle" font-family="Liberation Sans" font-size="12" fill="#5e5e5e">8</text><path d="M441.5,16V18M441.5,0V2.5" stroke="#999" stroke-width="1"/><path d="M462.5,5V10" stroke="#777" stroke-width="1"/><text x="481.8" y="11.6" text-anchor="middle" font-family="Liberation Sans" font-size="12" fill="#5e5e5e">9</text><path d="M481.5,16V18M481.5,0V2.5" stroke="#999" stroke-width="1"/><path d="M502.5,5V10" stroke="#777" stroke-width="1"/><text x="521.9" y="11.6" text-anchor="middle" font-family="Liberation Sans" font-size="12" fill="#5e5e5e">10</text><path d="M521.5,16V18M521.5,0V2.5" stroke="#999" stroke-width="1"/><path d="M542.5,5V10" stroke="#777" stroke-width="1"/><text x="562.0" y="11.6" text-anchor="middle" font-family="Liberation Sans" font-size="12" fill="#5e5e5e">11</text><path d="M562.5,16V18M562.5,0V2.5" stroke="#999" stroke-width="1"/><path d="M582.5,5V10" stroke="#777" stroke-width="1"/><text x="602.2" y="11.6" text-anchor="middle" font-family="Liberation Sans" font-size="12" fill="#5e5e5e">12</text><path d="M602.5,16V18M602.5,0V2.5" stroke="#999" stroke-width="1"/><path d="M622.5,5V10" stroke="#777" stroke-width="1"/><text x="642.3" y="11.6" text-anchor="middle" font-family="Liberation Sans" font-size="12" fill="#5e5e5e">13</text><path d="M642.5,16V18M642.5,0V2.5" stroke="#999" stroke-width="1"/><path d="M663.5,5V10" stroke="#777" stroke-width="1"/><text x="682.5" y="11.6" text-anchor="middle" font-family="Liberation Sans" font-size="12" fill="#5e5e5e">14</text><path d="M682.5,16V18M682.5,0V2.5" stroke="#999" stroke-width="1"/><path d="M703.5,5V10" stroke="#777" stroke-width="1"/><text x="722.6" y="11.6" text-anchor="middle" font-family="Liberation Sans" font-size="12" fill="#5e5e5e">15</text><path d="M722.5,16V18M722.5,0V2.5" stroke="#999" stroke-width="1"/><path d="M743.5,5V10" stroke="#777" stroke-width="1"/><text x="762.8" y="11.6" text-anchor="middle" font-family="Liberation Sans" font-size="12" fill="#5e5e5e">16</text><path d="M762.5,16V18M762.5,0V2.5" stroke="#999" stroke-width="1"/><path d="M783.5,5V10" stroke="#777" stroke-width="1"/><text x="802.9" y="11.6" text-anchor="middle" font-family="Liberation Sans" font-size="12" fill="#5e5e5e">17</text><path d="M802.5,16V18M802.5,0V2.5" stroke="#999" stroke-width="1"/><path d="M823.5,5V10" stroke="#777" stroke-width="1"/><path d="M170.5,15V18M167.5,18.5H173.5" stroke="#444" stroke-width="1"/><path d="M220.5,15V18M217.5,18.5H223.5" stroke="#444" stroke-width="1"/><path d="M270.5,15V18M267.5,18.5H273.5" stroke="#444" stroke-width="1"/><path d="M321.5,15V18M318.5,18.5H324.5" stroke="#444" stroke-width="1"/><path d="M371.5,15V18M368.5,18.5H374.5" stroke="#444" stroke-width="1"/><path d="M421.5,15V18M418.5,18.5H424.5" stroke="#444" stroke-width="1"/><path d="M471.5,15V18M468.5,18.5H474.5" stroke="#444" stroke-width="1"/><path d="M521.5,15V18M518.5,18.5H524.5" stroke="#444" stroke-width="1"/><path d="M571.5,15V18M568.5,18.5H574.5" stroke="#444" stroke-width="1"/><path d="M622.5,15V18M619.5,18.5H625.5" stroke="#444" stroke-width="1"/><path d="M672.5,15V18M669.5,18.5H675.5" stroke="#444" stroke-width="1"/><path d="M722.5,15V18M719.5,18.5H725.5" stroke="#444" stroke-width="1"/><path d="M772.5,15V18M769.5,18.5H775.5" stroke="#444" stroke-width="1"/><path d="M114.5,18.5L120,10.5L125.5,18.5Z" fill="#fff" stroke="#555" stroke-width="1"/></svg>
<svg class="i" style="left:414px;top:141px;" width="14" height="10" viewBox="0 0 14 10"><path d="M0.5,0.5H12.5V3L6.5,8.5L0.5,3Z" fill="#fff" stroke="#555" stroke-width="1"/></svg>
<svg class="i" style="left:1027px;top:151px;" width="14" height="10" viewBox="0 0 14 10"><path d="M0.5,8.5H12.5V7L6.5,0.5L0.5,7Z" fill="#fff" stroke="#555" stroke-width="1"/></svg>
<div class="b" style="left:1349px;top:138px;width:1px;height:737px;background:#ffffff;"></div>
<div class="b" style="left:1350px;top:138px;width:20px;height:737px;background:#f0f0f0;"></div>
<div class="b" style="left:1350px;top:159px;width:19px;height:399px;background:#cdcdcd;"></div>
<svg class="i" style="left:1354px;top:144px;" width="12" height="8" viewBox="0 0 12 8"><path d="M1.5,6.5L5.5,2.2L9.5,6.5" fill="none" stroke="#444" stroke-width="2"/></svg>
<svg class="i" style="left:1355px;top:861px;" width="10" height="7" viewBox="0 0 10 7"><path d="M0.8,1L4.8,5.5L8.8,1" fill="none" stroke="#444" stroke-width="1.3"/></svg>
<div class="b" style="left:1370px;top:138px;width:1px;height:737px;background:#9a9a9a;"></div>
<div class="b" style="left:1370px;top:469px;width:7px;height:74px;background:#6e6e6e;"></div>
<svg class="i" style="left:1371px;top:502px;" width="5" height="8" viewBox="0 0 5 8"><path d="M0.5,0.5L4,4L0.5,7.5Z" fill="#fff"/></svg>
<svg class="i" style="left:1393px;top:148px;" width="11" height="9" viewBox="0 0 11 9"><path d="M0,1.5H10M0,4.5H10M0,7.5H10" stroke="#333" stroke-width="1"/></svg>
<svg class="i" style="left:1388px;top:173px;" width="21" height="21" viewBox="0 0 21 21"><rect x="0.65" y="0.65" width="19.2" height="19" rx="0.8" fill="#fff" stroke="#3a3a3a" stroke-width="1.3"/><rect x="0.65" y="0.65" width="19.2" height="3" fill="#555"/><path d="M4,9.5H16.5M4,13.5H16.5" stroke="#3a3a3a" stroke-width="1.1"/><circle cx="11.3" cy="9.5" r="1.3" fill="#2a86d1"/><circle cx="8" cy="13.5" r="1.3" fill="#fff" stroke="#2a86d1" stroke-width="1.1"/></svg>
<svg class="i" style="left:1387px;top:207px;" width="23" height="23" viewBox="0 0 23 23"><path d="M1.2,18.5L7.8,1.2H9.6L15.5,15.5M4,12.2H13" fill="none" stroke="#3a3a3a" stroke-width="1.9"/><path d="M12,17L19.5,8.3A1.6,1.6 0 0 1 21.8,10.5L14.5,19Z" fill="#fff" stroke="#3a3a3a" stroke-width="1.1"/><path d="M14.5,19C13.2,21.2 10.5,22.6 7,22.3C9,20.3 10.5,18.5 12,17Z" fill="#5aa3e6" stroke="#1f6dc2" stroke-width="1.1"/></svg>
<svg class="i" style="left:1387px;top:243px;" width="24" height="21" viewBox="0 0 24 21"><path d="M0.65,19V1.3H6L8,3.5H15.5V6" fill="#fde5b8" stroke="#f08a24" stroke-width="1.2"/><path d="M0.65,19L3,7H22L20,19Z" fill="#f7d98c" stroke="#f08a24" stroke-width="1.2"/><rect x="8.6" y="6.8" width="13.4" height="13.4" fill="#fff" stroke="#3a3a3a" stroke-width="1.2"/><circle cx="12" cy="10" r="1.2" fill="#f08a24"/><path d="M9.2,19.6L13,14.5L15,16.5L18,13L21.4,16.5V19.6Z" fill="#8bbfee" stroke="#2a86d1" stroke-width="1"/></svg>
<svg class="i" style="left:1388px;top:278px;" width="21" height="21" viewBox="0 0 21 21"><circle cx="10" cy="10" r="9.3" fill="#fff" stroke="#3a3a3a" stroke-width="1.2"/><path d="M14.5,5.5L11.8,11.8L5.5,14.5L8.2,8.2Z" fill="#2a86d1"/><circle cx="10" cy="10" r="1.3" fill="#fff"/></svg>
<svg class="i" style="left:1389px;top:312px;" width="18" height="22" viewBox="0 0 18 22"><path d="M0.65,0.65H11.5L16.35,5.5V20.35H0.65Z" fill="#fafafa" stroke="#333" stroke-width="1.2" stroke-linejoin="round"/><path d="M11.5,0.65V5.5H16.35" fill="none" stroke="#333" stroke-width="1"/></svg>
<svg class="i" style="left:1388px;top:348px;" width="22" height="22" viewBox="0 0 22 22"><path d="M0.5,6C3.5,1.5 9.5,0.5 14,4" fill="none" stroke="#3a3a3a" stroke-width="1.1"/><circle cx="7.5" cy="6.3" r="3.2" fill="#fff" stroke="#3a3a3a" stroke-width="1"/><circle cx="7.5" cy="6.3" r="1.8" fill="#2a86d1"/><path d="M11,16L18.8,7.5A1.6,1.6 0 0 1 21,9.7L13.5,18Z" fill="#fff" stroke="#3a3a3a" stroke-width="1"/><path d="M13.5,18C12.2,20.3 9.5,21.7 6,21.4C8,19.3 9.5,17.5 11,16Z" fill="#5aa3e6" stroke="#1f6dc2" stroke-width="1"/></svg>
<svg class="i" style="left:1389px;top:383px;" width="21" height="21" viewBox="0 0 21 21"><path d="M0.65,0.65H10.5L15.35,5.5V19.35H0.65Z" fill="#fff" stroke="#3a3a3a" stroke-width="1.2" stroke-linejoin="round"/><path d="M10.5,0.65V5.5H15.35" fill="none" stroke="#3a3a3a" stroke-width="1"/><path d="M3,4H7M3,7H9M3,10H6M3,13H5" stroke="#555" stroke-width="0.9"/><path d="M7.5,10H11M6.5,13H9M3,16H4.5" stroke="#f08a24" stroke-width="1"/><path d="M8,20.5L8.8,17L16.5,9.3L18.7,11.5L11,19.2Z" fill="#4b94d8" stroke="#1f6dc2" stroke-width="1"/></svg>
<div class="b" style="left:0px;top:875px;width:1413px;height:24px;background:#f0f0f0;border-top:1px solid #a4a4a4;"></div>
<svg class="i" style="left:8px;top:883px;" width="12" height="11" viewBox="0 0 12 11"><path d="M0.6,0.6H10.4V10.4H2.2L0.6,8.8Z" fill="#fff" stroke="#444" stroke-width="1.1"/><rect x="3" y="0.6" width="6" height="3.4" fill="none" stroke="#444" stroke-width="0.9"/><rect x="3" y="6.5" width="6" height="3.8" fill="none" stroke="#444" stroke-width="0.9"/></svg>
<div class="b" style="left:28px;top:878px;width:1px;height:21px;background:#cfcfcf;"></div>
<div class="b" style="left:226px;top:878px;width:1px;height:21px;background:#cfcfcf;"></div>
<div class="b" style="left:497px;top:878px;width:1px;height:21px;background:#cfcfcf;"></div>
<div class="b" style="left:544px;top:878px;width:1px;height:21px;background:#cfcfcf;"></div>
<div class="b" style="left:692px;top:878px;width:1px;height:21px;background:#cfcfcf;"></div>
<div class="b" style="left:833px;top:878px;width:1px;height:21px;background:#cfcfcf;"></div>
<div class="b" style="left:904px;top:878px;width:1px;height:21px;background:#cfcfcf;"></div>
<div class="b" style="left:934px;top:878px;width:1px;height:21px;background:#cfcfcf;"></div>
<div class="b" style="left:965px;top:878px;width:1px;height:21px;background:#cfcfcf;"></div>
<div class="b" style="left:1140px;top:878px;width:1px;height:21px;background:#cfcfcf;"></div>
<div class="b" style="left:1218px;top:878px;width:1px;height:21px;background:#cfcfcf;"></div>
<div class="b" style="left:1363px;top:878px;width:1px;height:21px;background:#cfcfcf;"></div>
<div class="t" style="left:38.60px;top:879.30px;font-size:15px;line-height:20px;font-family:'Liberation Sans',sans-serif;color:#000;letter-spacing:-0.1px;text-align:left;white-space:pre;">Страница 1 из 1</div>
<div class="t" style="left:236.60px;top:879.30px;font-size:15px;line-height:20px;font-family:'Liberation Sans',sans-serif;color:#000;letter-spacing:-0.125px;text-align:left;white-space:pre;">172 слова, 2 869 символов</div>
<div class="t" style="left:553.60px;top:879.30px;font-size:15px;line-height:20px;font-family:'Liberation Sans',sans-serif;color:#000;letter-spacing:0.433px;text-align:left;white-space:pre;">Базовый</div>
<div class="t" style="left:735.80px;top:879.30px;font-size:15px;line-height:20px;font-family:'Liberation Sans',sans-serif;color:#000;text-align:left;white-space:pre;">Русский</div>
<svg class="i" style="left:911px;top:883px;" width="18" height="12" viewBox="0 0 18 12"><rect x="1.1" y="3.1" width="8.5" height="5.8" fill="none" stroke="#2a86d1" stroke-width="1.1"/><path d="M11.5,0.6H16.5M14,0.6V10.9M11.5,10.9H16.5" fill="none" stroke="#333" stroke-width="1"/></svg>
<svg class="i" style="left:1153px;top:883px;" width="56" height="12" viewBox="0 0 56 12"><path d="M0.6,0.6H5.8L8.4,3.2V10.9H0.6Z" fill="#fff" stroke="#2a86d1" stroke-width="1.1"/><path d="M15.6,0.6H21.5V10.9H15.6ZM24.6,0.6H30.5L32.5,2.6V10.9H24.6Z" fill="#fff" stroke="#333" stroke-width="1.1"/><path d="M40,2.6Q43.5,0.6 47.5,1.6V10.9Q43.5,10 40,10.9ZM47.5,1.6Q51.5,0.6 54.8,2.6V10.9Q51.5,10 47.5,10.9Z" fill="#fff" stroke="#333" stroke-width="1.1"/></svg>
<svg class="i" style="left:1227px;top:883px;" width="132" height="12" viewBox="0 0 132 12"><path d="M1,5.5H11" stroke="#333" stroke-width="2"/><path d="M16.5,5.5H114.5" stroke="#777" stroke-width="1"/><path d="M33,3.5V7.5M64,3.5V7.5" stroke="#777" stroke-width="1"/><rect x="53.5" y="0.6" width="4" height="10.2" fill="#f0f0f0" stroke="#555" stroke-width="1"/><path d="M120,5.5H130M125,0.5V10.5" stroke="#333" stroke-width="2"/></svg>
<div class="t" style="left:1373.40px;top:879.30px;font-size:15px;line-height:20px;font-family:'Liberation Sans',sans-serif;color:#000;letter-spacing:-0.4px;text-align:left;white-space:pre;">85 %</div>
</body></html>
